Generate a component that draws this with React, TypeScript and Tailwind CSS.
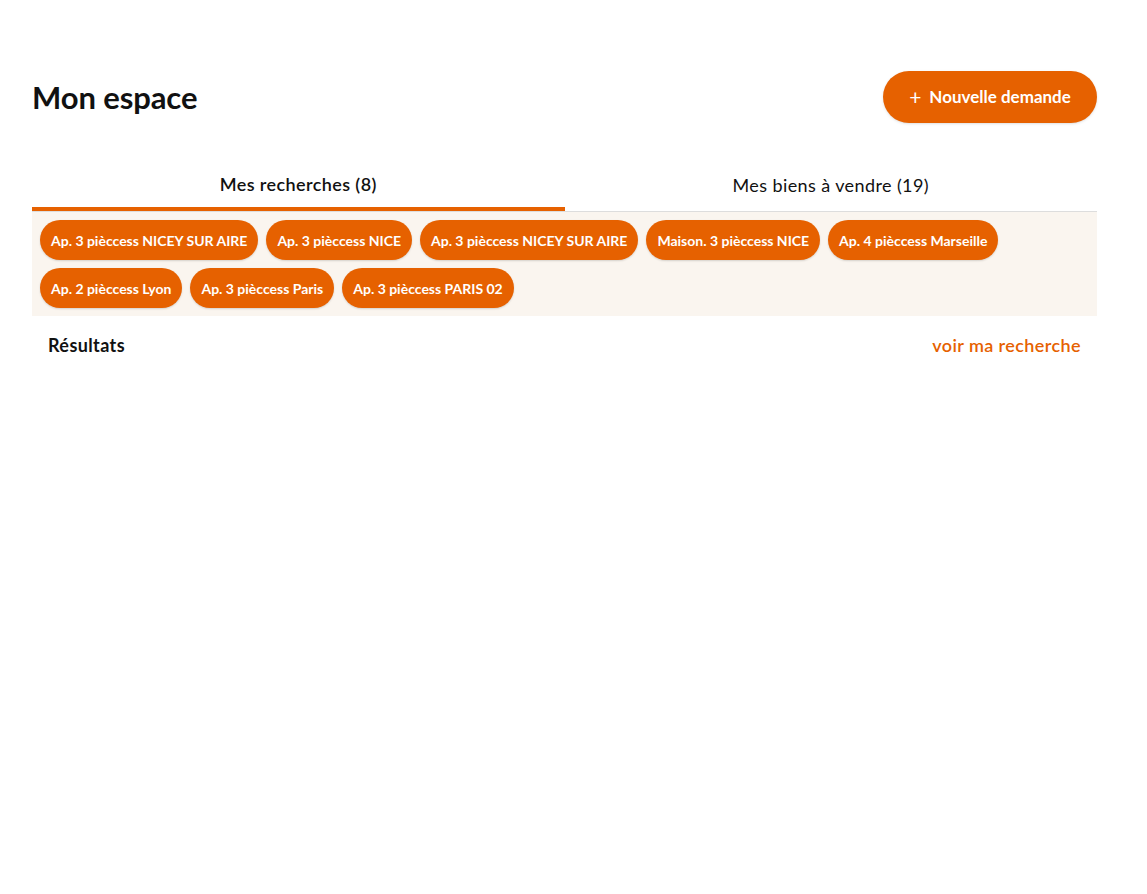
import React from 'react';

const searches = [
    'Ap. 3 pièccess NICEY SUR AIRE',
    'Ap. 3 pièccess NICE',
    'Ap. 3 pièccess NICEY SUR AIRE',
    'Maison. 3 pièccess NICE',
    'Ap. 4 pièccess Marseille',
    'Ap. 2 pièccess Lyon',
    'Ap. 3 pièccess Paris',
    'Ap. 3 pièccess PARIS 02',
];

const App: React.FC = () => {
    return (
        <div className="min-h-screen bg-white text-[#111] font-['Lato',sans-serif]">
            <div className="pl-8 pr-[50px] pt-[71px]">
                {/* Header */}
                <div className="flex items-center justify-between">
                    <h1 className="text-[31px] font-bold tracking-[-0.1px]">Mon espace</h1>
                    <button className="h-[52px] w-[214px] rounded-full bg-[#e66100] text-white text-[17px] font-bold flex items-center justify-center gap-2 shadow-sm">
                        <span className="text-[21px] font-normal leading-none -mt-[2px]">+</span>
                        <span>Nouvelle demande</span>
                    </button>
                </div>

                {/* Tabs */}
                <div className="mt-[37px] flex border-b border-[#ddd]">
                    <button className="flex-1 h-[51px] border-b-4 border-[#e66100] text-[18px] tracking-[0.4px] font-semibold pt-[2px]">
                        Mes recherches (8)
                    </button>
                    <button className="flex-1 h-[51px] text-[18px] tracking-[0.4px]">
                        Mes biens à vendre (19)
                    </button>
                </div>

                {/* Chips */}
                <div className="bg-[#faf5ef] p-2 flex flex-wrap gap-2">
                    {searches.map((s, i) => (
                        <span
                            key={i}
                            className="h-10 px-[11px] rounded-full bg-[#e66100] text-white text-[14px] font-bold flex items-center shadow-[0_1px_2px_rgba(0,0,0,0.15)]"
                        >
                            {s}
                        </span>
                    ))}
                </div>

                {/* Results */}
                <div className="flex items-center justify-between px-4 pt-[16px]">
                    <span className="text-[18px] tracking-[0.4px] font-bold">Résultats</span>
                    <a className="text-[18px] tracking-[0.4px] font-semibold text-[#e66100]">voir ma recherche</a>
                </div>
            </div>
        </div>
    );
};

export default App;
